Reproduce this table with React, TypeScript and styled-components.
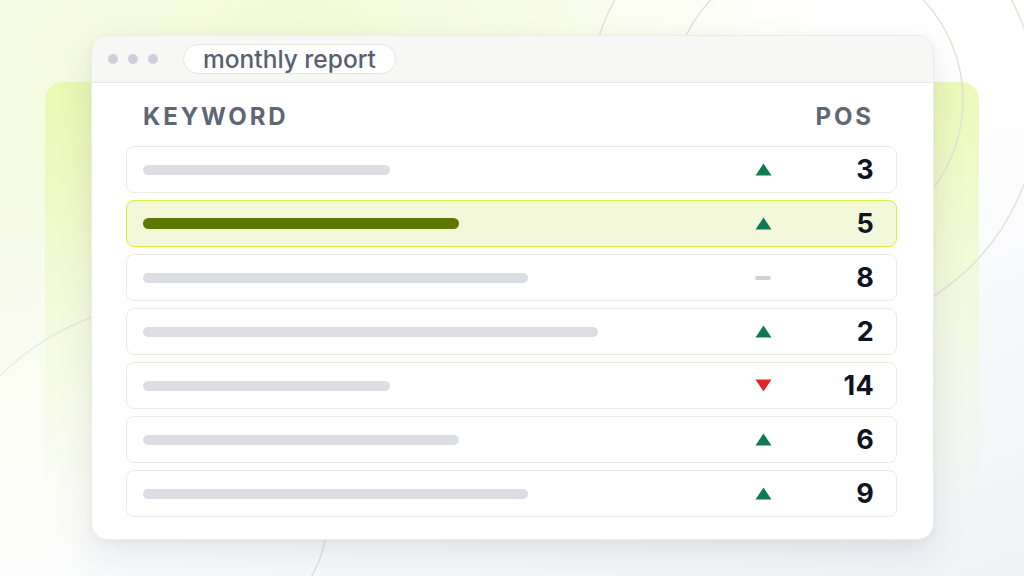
import React from "react";
import styled, { createGlobalStyle } from "styled-components";

const GlobalStyle = createGlobalStyle`
  * { box-sizing: border-box; }
  html, body { margin: 0; padding: 0; }
  body {
    width: 1024px;
    height: 576px;
    overflow: hidden;
    font-family: Inter, "Noto Sans", "Liberation Sans", sans-serif;
  }
`;

const Stage = styled.div`
  position: relative;
  width: 1024px;
  height: 576px;
  overflow: hidden;
  padding: 35px 90px 0 91px;
  background:
    radial-gradient(ellipse 520px 260px at 300px 30px, rgba(240, 249, 205, 0.85) 0%, rgba(255, 255, 255, 0) 100%),
    radial-gradient(ellipse 300px 400px at 0px 200px, rgba(244, 249, 225, 0.8) 0%, rgba(255, 255, 255, 0) 100%),
    linear-gradient(160deg, #ffffff 45%, #f1f2f6 100%);
`;

const LimePanel = styled.div`
  position: absolute;
  left: 45px;
  top: 82px;
  width: 934px;
  height: 430px;
  border-radius: 18px;
  background: linear-gradient(180deg, rgba(232, 248, 170, 0.85) 0%, rgba(238, 248, 200, 0.45) 55%, rgba(240, 248, 215, 0) 100%);
`;

const Rings = styled.svg`
  position: absolute;
  left: 0;
  top: 0;
  width: 1024px;
  height: 576px;
`;

const Card = styled.div`
  position: relative;
  width: 843px;
  height: 505px;
  background: #ffffff;
  border-radius: 16px;
  border: 1px solid #ecece8;
  box-shadow: 0 14px 36px rgba(30, 30, 50, 0.09), 0 2px 8px rgba(30, 30, 50, 0.04);
  overflow: hidden;
  display: flex;
  flex-direction: column;
`;

const TitleBar = styled.div`
  height: 47px;
  background: #f7f7f5;
  border-bottom: 1.5px solid #e8e8e3;
  display: flex;
  align-items: center;
  padding-left: 16px;
  gap: 25px;
`;

const Dots = styled.div`
  display: flex;
  gap: 10px;
`;

const Dot = styled.span`
  width: 10px;
  height: 10px;
  border-radius: 50%;
  background: #cdd0da;
`;

const Pill = styled.div`
  height: 30px;
  padding: 0 19px;
  border-radius: 15px;
  border: 1.5px solid #e6e6e1;
  background: #ffffff;
  display: flex;
  align-items: center;
  font-size: 24.5px;
  font-weight: 500;
  color: #596070;
`;

const Body = styled.div`
  padding: 19px 36px 0 34px;
  display: flex;
  flex-direction: column;
`;

const HeaderRow = styled.div`
  display: flex;
  justify-content: space-between;
  align-items: center;
  height: 28px;
  padding: 0 23px 0 17px;
  margin-bottom: 16px;
  font-size: 24px;
  font-weight: 700;
  letter-spacing: 2.9px;
  color: #5f6674;
`;

const List = styled.div`
  display: flex;
  flex-direction: column;
  gap: 7px;
`;

const Row = styled.div<{ $active?: boolean }>`
  height: 47px;
  border-radius: 8px;
  border: 1.5px solid ${(p) => (p.$active ? "#d4ef3c" : "#ebebe6")};
  background: ${(p) => (p.$active ? "#f2f8d9" : "#ffffff")};
  display: grid;
  grid-template-columns: 1fr 46px 88px;
  align-items: center;
  padding: 0 22px 0 15.5px;
`;

const Bar = styled.div<{ $w: number; $active?: boolean }>`
  width: ${(p) => p.$w}px;
  height: ${(p) => (p.$active ? 11 : 10)}px;
  border-radius: 6px;
  background: ${(p) => (p.$active ? "#5f7800" : "#dddee4")};
`;

const Trend = styled.div`
  display: flex;
  justify-content: center;
  align-items: center;
`;

const Dash = styled.span`
  width: 16px;
  height: 4px;
  border-radius: 2px;
  background: #cfd1d9;
`;

const Pos = styled.div`
  text-align: right;
  font-size: 27px;
  font-weight: 700;
  color: #0f1322;
  letter-spacing: 0.3px;
`;

type Dir = "up" | "down" | "flat";

const Arrow = ({ dir }: { dir: Dir }) => {
  if (dir === "flat") return <Dash />;
  return (
    <svg width="17" height="13" viewBox="0 0 17 13">
      {dir === "up" ? (
        <polygon points="8.5,0.5 16.5,12.5 0.5,12.5" fill="#0f7a50" />
      ) : (
        <polygon points="0.5,0.5 16.5,0.5 8.5,12.5" fill="#e02626" />
      )}
    </svg>
  );
};

const rows: { w: number; dir: Dir; pos: number; active?: boolean }[] = [
  { w: 247, dir: "up", pos: 3 },
  { w: 316, dir: "up", pos: 5, active: true },
  { w: 385, dir: "flat", pos: 8 },
  { w: 455, dir: "up", pos: 2 },
  { w: 247, dir: "down", pos: 14 },
  { w: 316, dir: "up", pos: 6 },
  { w: 385, dir: "up", pos: 9 },
];

export default function App() {
  return (
    <>
      <GlobalStyle />
      <Stage>
        <LimePanel />
        <Rings viewBox="0 0 1024 576">
          <defs>
            <linearGradient id="fadeLeft" x1="0" y1="0" x2="1" y2="0">
              <stop offset="0" stopColor="#e2e2dd" stopOpacity="0.5" />
              <stop offset="0.35" stopColor="#e2e2dd" stopOpacity="1" />
            </linearGradient>
          </defs>
          <g fill="none" stroke="#e2e2dd" strokeWidth="1.5">
            <circle cx="813" cy="106" r="225" />
            <circle cx="817" cy="100" r="146" />
            <path d="M 0 376 A 255 255 0 0 1 330 350" stroke="url(#fadeLeft)" />
            <path d="M 327 517 A 120 120 0 0 1 300 593" />
          </g>
        </Rings>
        <Card>
          <TitleBar>
            <Dots>
              <Dot />
              <Dot />
              <Dot />
            </Dots>
            <Pill>monthly report</Pill>
          </TitleBar>
          <Body>
            <HeaderRow>
              <span>KEYWORD</span>
              <span>POS</span>
            </HeaderRow>
            <List>
              {rows.map((r, i) => (
                <Row key={i} $active={r.active}>
                  <Bar $w={r.w} $active={r.active} />
                  <Trend>
                    <Arrow dir={r.dir} />
                  </Trend>
                  <Pos>{r.pos}</Pos>
                </Row>
              ))}
            </List>
          </Body>
        </Card>
      </Stage>
    </>
  );
}
